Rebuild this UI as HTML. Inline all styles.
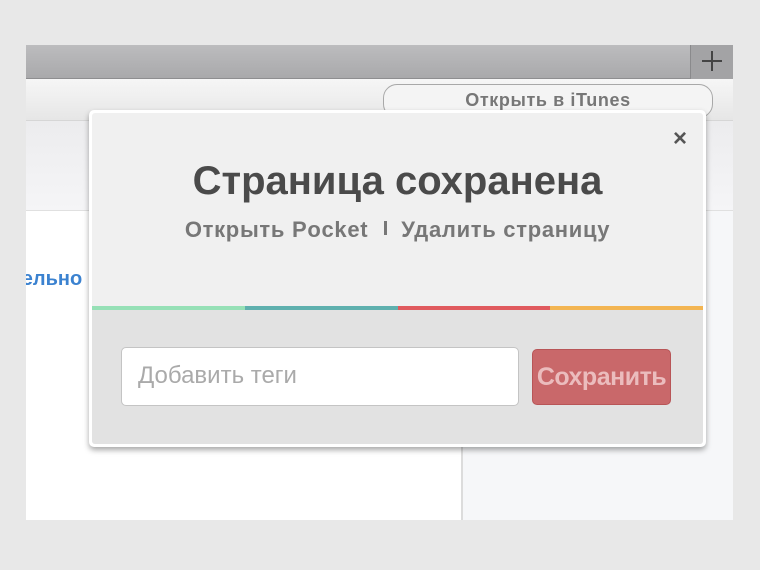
<!DOCTYPE html>
<html><head><meta charset="utf-8"><style>
*{margin:0;padding:0;box-sizing:border-box}
body{width:760px;height:570px;background:#e8e8e8;position:relative;overflow:hidden;font-family:"Liberation Sans",sans-serif}
.abs{position:absolute}
</style></head><body>
<div class="abs" style="left:26px;top:45px;width:707px;height:475px;background:#fff;overflow:hidden">
  <div class="abs" style="left:0;top:0;width:707px;height:34px;background:linear-gradient(#bcbcbe,#a9a9ab);border-bottom:1px solid #8e8e90"></div>
  <div class="abs" style="left:664px;top:0;width:43px;height:34px;background:#a3a3a5;border-left:1px solid #8a8a8c"></div>
  <div class="abs" style="left:676px;top:6px;width:20px;height:20px">
    <div class="abs" style="left:9px;top:0;width:1.5px;height:20px;background:#444"></div>
    <div class="abs" style="left:0;top:9px;width:20px;height:1.5px;background:#444"></div>
  </div>
  <div class="abs" style="left:0;top:34px;width:707px;height:42px;background:linear-gradient(#f6f6f6,#e6e6e6);border-bottom:1px solid #d6d6d6"></div>
  <div class="abs" style="left:357px;top:39px;width:330px;height:34px;border:1.5px solid #a8a8a8;border-radius:14px;background:#f4f4f4;color:#777;font-weight:bold;font-size:18px;text-align:center;line-height:30px;letter-spacing:0.6px">Открыть в iTunes</div>
  <div class="abs" style="left:0;top:76px;width:707px;height:90px;background:linear-gradient(#ececee,#f5f5f7);border-bottom:1px solid #e0e0e0"></div>
  <div class="abs" style="left:435px;top:166px;width:272px;height:309px;background:#f6f7f9;border-left:2px solid #dcdcdc"></div>
  <div class="abs" style="left:-14px;top:223px;color:#3b82d0;font-weight:bold;font-size:20px">тельно</div>
</div>
<div class="abs" style="left:89px;top:110px;width:617px;height:337px;background:#fff;border-radius:5px;box-shadow:0 3px 6px rgba(0,0,0,.35);padding:3px">
  <div style="position:relative;width:611px;height:331px;background:#f0f0f0;overflow:hidden;border-radius:3px">
    <div class="abs" style="right:16px;top:12px;font-size:24px;font-weight:bold;color:#555">×</div>
    <div class="abs" style="left:0;width:611px;top:46px;text-align:center;font-size:40px;font-weight:bold;color:#4a4a4a">Страница сохранена</div>
    <div class="abs" style="left:0;width:611px;top:104px;text-align:center;font-size:22px;font-weight:bold;color:#777;letter-spacing:0.7px">Открыть Pocket<span style="display:inline-block;width:3px;height:14px;background:#777;margin:0 14px 0 16px;vertical-align:2px"></span>Удалить страницу</div>
    <div class="abs" style="left:0;top:193px;width:611px;height:4px;display:flex">
      <div style="flex:1;background:#96e0b6"></div><div style="flex:1;background:#5fb0ae"></div><div style="flex:1;background:#e05a5e"></div><div style="flex:1;background:#f3b552"></div>
    </div>
    <div class="abs" style="left:0;top:197px;width:611px;height:134px;background:#e2e2e2"></div>
    <div class="abs" style="left:29px;top:234px;width:398px;height:59px;background:#fff;border:1.5px solid #c4c4c4;border-radius:5px;color:#aaa;font-size:24px;line-height:56px;padding-left:16px">Добавить теги</div>
    <div class="abs" style="left:440px;top:236px;width:139px;height:56px;background:#c9686a;border:1.5px solid #b85557;border-radius:5px;color:#ebbcbd;font-size:25px;font-weight:bold;text-align:center;line-height:54px;white-space:nowrap;overflow:hidden;letter-spacing:-0.5px">Сохранить</div>
  </div>
</div>
</body></html>
